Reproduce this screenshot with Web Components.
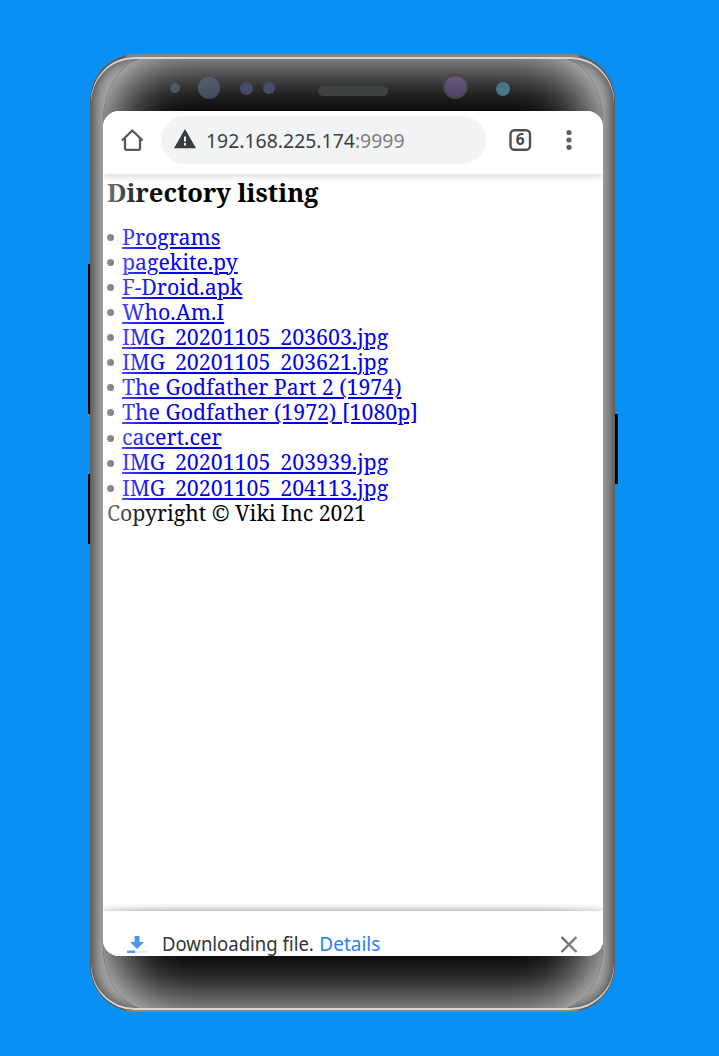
<!DOCTYPE html>
<html lang="en">
<head>
<meta charset="utf-8">
<title>Directory listing</title>
<style>
html,body{margin:0;height:100%;background:#0990f5;overflow:hidden}
body{font-family:"Noto Sans",sans-serif}
</style>
</head>
<body>
<phone-frame>
  <browser-bar></browser-bar>
  <directory-page></directory-page>
  <download-bar></download-bar>
</phone-frame>
<script>
const define=(name,html,after)=>customElements.define(name,class extends HTMLElement{
  connectedCallback(){
    if(this.shadowRoot)return;
    const t=document.createElement('template');t.innerHTML=html;
    this.attachShadow({mode:'open'}).append(t.content.cloneNode(true));
    if(after)after(this);
  }
});

/* A run of text scaled horizontally to the width given in its "w" attribute. */
define('fit-text',`<style>
:host{display:block;white-space:nowrap;width:max-content;transform-origin:0 50%}
</style><slot></slot>`,el=>requestAnimationFrame(()=>{
  const w=el.offsetWidth;
  if(w){el.style.transform='scaleX('+(+el.getAttribute('w')/w)+')';el.style.marginRight=(el.getAttribute('w')-w)+'px';}
}));

define('phone-frame',`<style>
:host{display:block;position:relative;width:525px;height:958px;margin:54px 0 0 90px}
.key{position:absolute;background:#000;width:4px}
.body{position:absolute;inset:0;box-sizing:border-box;border-radius:46px;overflow:hidden;display:flex;flex-direction:column;padding:57px 12px 56px 13px;
 background:#a2a2a2;box-shadow:inset 0 0 13px 3px #3a3a3a}
.rim{position:absolute;inset:0 36px;box-shadow:inset 0 3px 0 #858585,inset 0 -2px 0 #858585}
.line{position:absolute;inset:3px 1px 2px 1px;border-radius:44px;box-shadow:inset 0 2px 0 #d6d6d6,inset 0 -2px 0 #d6d6d6}
.glass{position:absolute;inset:3px 12px 2px 13px;border-radius:48px/64px;background:#000}
.glow{position:absolute;inset:3px 12px 2px 13px;border-radius:48px/64px;box-shadow:inset 0 0 68px 1px #fff}
.screen{position:relative;height:845px;flex:none;display:flex;flex-direction:column;background:#fff;border-radius:16px;overflow:hidden}
.dot{position:absolute;border-radius:50%}
</style>
<i class="key" style="left:-2px;top:210px;height:150px"></i>
<i class="key" style="left:-2px;top:420px;height:70px"></i>
<i class="key" style="right:-3px;top:360px;height:70px"></i>
<div class="body">
 <div class="glass"></div>
 <div class="screen"><slot></slot></div>
 <div class="glow"></div>
 <div class="rim"></div><div class="line"></div>
 <i class="dot" style="left:80px;top:29px;width:10px;height:10px;background:#4c5a66"></i>
 <i class="dot" style="left:108px;top:23px;width:22px;height:22px;background:linear-gradient(#56616d,#3d4a58)"></i>
 <i class="dot" style="left:150px;top:28px;width:13px;height:13px;background:#474b6b"></i>
 <i class="dot" style="left:173px;top:28px;width:12px;height:12px;background:#474b6b"></i>
 <i class="dot" style="left:228px;top:32px;width:70px;height:10px;border-radius:5px;background:#3f4242"></i>
 <i class="dot" style="left:353px;top:20px;width:21px;height:21px;border:2px solid #484848;background:linear-gradient(#68597c,#50426a)"></i>
 <i class="dot" style="left:406px;top:28px;width:14px;height:14px;background:#4b748b"></i>
</div>`);

define('browser-bar',`<style>
:host{display:flex;flex:none;align-items:flex-start;height:63px;box-sizing:border-box;padding:5px 24px 0 17px;background:#fff;box-shadow:0 1px 8px #0003;position:relative;z-index:1;color:#3c3f43}
.home{width:24px;height:24px;margin:12px 17px 0 0}
.url{display:flex;align-items:center;width:325px;height:48px;box-sizing:border-box;border-radius:24px;background:#f1f3f4;padding:0 0 0 13px;font-size:20px}
.warn{width:22px;height:20px;margin:-2px 10px 0 0}
.url span{color:#7c7f83}
.tabs{width:24px;height:24px;margin:12px 0 0 22px}
.more{width:8px;height:24px;margin:12px 0 0 33px}
svg{display:block;flex:none}
</style>
<svg class="home" viewBox="0 0 24 24" fill="none" stroke="#56595b" stroke-width="2.3"><path d="M2 12.5 12.3 2.5 22.6 12.5M5 10.5V20.2Q5 21.8 6.6 21.8H18.4Q20 21.8 20 20.2V10.5" stroke-linejoin="round"/></svg>
<div class="url"><svg class="warn" viewBox="0 0 22 20"><path d="M11 0 22 19.2H0Z" fill="#383c3f"/><path d="M11 7.5V12.5M11 14V16.5" stroke="#f1f3f4" stroke-width="2"/></svg><fit-text w="199">192.168.225.174<span>:9999</span></fit-text></div>
<svg class="tabs" viewBox="0 0 24 24"><rect x="2.5" y="2.3" width="19.5" height="19.5" rx="4" fill="none" stroke="#4c5054" stroke-width="2.4"/><text x="12.2" y="17.2" text-anchor="middle" font-family="Noto Sans" font-weight="700" font-size="15.5" fill="#44474b">6</text></svg>
<svg class="more" viewBox="0 0 8 24" fill="#5d6063"><circle cx="4" cy="4.5" r="2.6"/><circle cx="4" cy="12" r="2.6"/><circle cx="4" cy="19.3" r="2.6"/></svg>`);

define('file-link',`<style>
:host{display:flex;align-items:center;height:25.1px}
:host::before{content:"";width:7px;height:7px;border-radius:50%;background:#333;margin-right:8px;position:relative;top:1.2px}
a{color:#00e;text-decoration:underline;text-decoration-thickness:1.7px;text-underline-offset:2px}
</style><fit-text><a href="#"><slot></slot></a></fit-text>`,el=>el.shadowRoot.querySelector('fit-text').setAttribute('w',el.getAttribute('w')));

define('directory-page',`<style>
:host{display:block;flex:1;padding:0 4px;color:#000;font:21.6px/25.1px "Noto Serif","DejaVu Serif Condensed","DejaVu Serif",serif;font-stretch:condensed}
h2{margin:0 0 13.6px;font-size:25.5px;line-height:36px;font-weight:700}
</style>
<h2><fit-text w="211">Directory listing</fit-text></h2>
<file-link w="98">Programs</file-link>
<file-link w="116">pagekite.py</file-link>
<file-link w="120">F-Droid.apk</file-link>
<file-link w="102">Who.Am.I</file-link>
<file-link w="266">IMG_20201105_203603.jpg</file-link>
<file-link w="266">IMG_20201105_203621.jpg</file-link>
<file-link w="280">The Godfather Part 2 (1974)</file-link>
<file-link w="296">The Godfather (1972) [1080p]</file-link>
<file-link w="99">cacert.cer</file-link>
<file-link w="266">IMG_20201105_203939.jpg</file-link>
<file-link w="266">IMG_20201105_204113.jpg</file-link>
<fit-text w="259">Copyright © Viki Inc 2021</fit-text>`);

define('download-bar',`<style>
:host{display:flex;flex:none;align-items:flex-start;height:45px;box-sizing:border-box;background:#fff;box-shadow:0 -1px 7px #0006;padding:20px 25px 0 24px;position:relative;font-size:19px;line-height:26px;color:#2c3033}
.dl{width:21px;height:20px;margin:5px 14px 0 0}
.x{width:18px;height:18px;margin:5px 0 0 auto}
a{color:#2b7cf0;margin-left:5.5px}
</style>
<svg class="dl" viewBox="0 0 21 20"><path d="M7.5 0H12.5V6H17L10 13 3 6H7.5Z" fill="#2278ec"/><path d="M0 15.8H20" stroke="#d5e7fb" stroke-width="2"/><path d="M0 15.8H8" stroke="#2278ec" stroke-width="2.4"/></svg>
<fit-text w="152">Downloading file.</fit-text><a><fit-text w="61">Details</fit-text></a>
<svg class="x" viewBox="0 0 18 18" fill="none" stroke="#4f5255" stroke-width="2.4"><path d="M1.5 1 16.5 16M16.5 1 1.5 16"/></svg>`);
</script>
</body>
</html>
